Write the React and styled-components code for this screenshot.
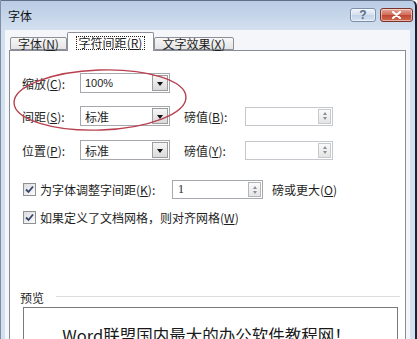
import React from "react";
import styled, { createGlobalStyle } from "styled-components";

const GlobalStyle = createGlobalStyle`
  html, body { margin: 0; padding: 0; }
  body {
    width: 417px;
    height: 339px;
    overflow: hidden;
    font-family: "Noto Sans CJK SC", "Liberation Sans", sans-serif;
    font-size: 12px;
    color: #1e1e1e;
  }
`;

const Window = styled.div`
  position: relative;
  width: 417px;
  height: 339px;
  box-sizing: border-box;
  display: flex;
  flex-direction: column;
  background: linear-gradient(#b9cce4, #d3e0f0 30px, #d3e0f0);
  border-top: 1px solid #5e6f86;
  border-left: 1px solid #7d8ea5;
  border-right: 2px solid #16253a;
  border-top-right-radius: 6px;
  padding: 0 5px 0 4px;
  overflow: hidden;
`;

const TitleBar = styled.div`
  height: 29px;
  flex: none;
  display: flex;
  justify-content: space-between;
  margin-right: -3px;
`;

const Title = styled.div`
  padding: 6px 0 0 3px;
  font-size: 12px;
  color: #111;
`;

const TitleButtons = styled.div`
  display: flex;
  gap: 4px;
  margin-top: 7px;
`;

const CapButton = styled.div`
  height: 14px;
  width: ${(p) => (p.$close ? 33 : 26)}px;
  box-sizing: border-box;
  border-radius: 3px;
  display: flex;
  align-items: center;
  justify-content: center;
  border: 1px solid ${(p) => (p.$close ? "#7a3328" : "#7c8ea8")};
  background: ${(p) =>
    p.$close
      ? "linear-gradient(#e6a99b, #cf6b58 50%, #bd4633 51%, #cf6a4e)"
      : "linear-gradient(#eef3fa, #d4e0ef 50%, #c2d2e7 51%, #d6e3f2)"};
  box-shadow: inset 0 0 0 1px rgba(255, 255, 255, 0.5);
  color: #5a6d88;
  font-family: "Liberation Sans", sans-serif;
  font-size: 12px;
  font-weight: bold;
  line-height: 1;
`;

const Client = styled.div`
  flex: 1;
  display: flex;
  flex-direction: column;
  background: #f4f6f9;
  padding: 2px 4px 0 4px;
  min-height: 0;
`;

const TabStrip = styled.div`
  display: flex;
  align-items: flex-end;
  height: 18px;
  padding-left: 1px;
  flex: none;
`;

const Tab = styled.div`
  position: relative;
  z-index: ${(p) => (p.$active ? 2 : 1)};
  box-sizing: border-box;
  width: ${(p) => p.$w}px;
  height: ${(p) => (p.$active ? 19 : 13)}px;
  margin-bottom: ${(p) => (p.$active ? -1 : 0)}px;
  border: 1px solid #8c9099;
  border-bottom: ${(p) => (p.$active ? "none" : "1px solid #8c9099")};
  border-radius: 2px 2px 0 0;
  background: ${(p) =>
    p.$active ? "#fff" : "linear-gradient(#f7f7f7, #e4e4e4)"};
  display: flex;
  align-items: center;
  justify-content: center;
  padding-top: ${(p) => (p.$active ? 2 : 0)}px;
  font-size: 12px;
  line-height: 12px;
  white-space: nowrap;
`;

const Focus = styled.span`
  border: 1px dotted #222;
  padding: 0 2px;
  line-height: 12px;
`;

const Panel = styled.div`
  position: relative;
  flex: 1;
  background: #fff;
  border: 1px solid #898c94;
  border-bottom: none;
  padding-left: 12px;
  display: flex;
  flex-direction: column;
`;

const Row = styled.div`
  display: flex;
  align-items: center;
  height: 20px;
  margin-top: ${(p) => p.$mt}px;
  flex: none;
`;

const Label = styled.div`
  width: 58px;
  white-space: nowrap;
`;

const Select = styled.div`
  width: 90px;
  height: 20px;
  box-sizing: border-box;
  border: 1px solid #a5a9ae;
  background: #fff;
  display: flex;
  align-items: center;
  padding-left: 4px;
  font-size: 12px;
`;

const SelectValue = styled.div`
  flex: 1;
  font-size: ${(p) => (p.$latin ? 11 : 12)}px;
  font-family: ${(p) =>
    p.$latin ? '"Liberation Sans", sans-serif' : "inherit"};
`;

const DropButton = styled.div`
  width: 16px;
  height: 16px;
  margin-right: 1px;
  box-sizing: border-box;
  border: 1px solid #9c9c9c;
  background: linear-gradient(#f6f6f6, #dadada);
  display: flex;
  align-items: center;
  justify-content: center;

  &::after {
    content: "";
    border-left: 3.5px solid transparent;
    border-right: 3.5px solid transparent;
    border-top: 4px solid #111;
    margin-top: 1px;
  }
`;

const PointLabel = styled.div`
  margin-left: 14px;
  width: 61px;
  white-space: nowrap;
`;

const Spin = styled.div`
  width: ${(p) => p.$w}px;
  height: 19px;
  box-sizing: border-box;
  border: 1px solid ${(p) => (p.$off ? "#c4c7cb" : "#a5a9ae")};
  background: #fff;
  display: flex;
  align-items: center;
  padding-left: 5px;
`;

const SpinValue = styled.div`
  flex: 1;
  font-family: "Liberation Serif", serif;
  font-size: 12px;
`;

const SpinButtons = styled.div`
  width: 13px;
  height: 15px;
  margin-right: 1px;
  box-sizing: border-box;
  border: 1px solid ${(p) => (p.$off ? "#c6c9cd" : "#b2b5b9")};
  background: linear-gradient(#fafafa, #e4e4e4);
  display: flex;
  flex-direction: column;
  align-items: center;
  justify-content: center;
  gap: 2px;
`;

const Arrow = styled.span`
  width: 0;
  height: 0;
  border-left: 2.5px solid transparent;
  border-right: 2.5px solid transparent;
  ${(p) =>
    p.$up
      ? "border-bottom: 3px solid #8a8f96;"
      : "border-top: 3px solid #8a8f96;"}
`;

const CheckRow = styled.div`
  display: flex;
  align-items: center;
  height: 19px;
  margin-top: ${(p) => p.$mt}px;
  padding-left: 1px;
  flex: none;
`;

const Box = styled.div`
  width: 13px;
  height: 13px;
  box-sizing: border-box;
  border: 1px solid #8f9092;
  background: linear-gradient(135deg, #dcdde0, #fbfbfb);
  display: flex;
  align-items: center;
  justify-content: center;
  margin-right: 4px;
`;

const CheckText = styled.div`
  width: ${(p) => (p.$w ? `${p.$w}px` : "auto")};
  white-space: nowrap;
`;

const After = styled.div`
  margin-left: 9px;
  white-space: nowrap;
`;

const PreviewHead = styled.div`
  display: flex;
  align-items: center;
  height: 14px;
  margin: 63px 5px 0 -2px;
  flex: none;
`;

const Rule = styled.div`
  flex: 1;
  margin-left: 12px;
  border-top: 1px solid #dcdcdc;
  border-bottom: 1px solid #fff;
`;

const PreviewBox = styled.div`
  flex: 1;
  margin: 3px 7px 0 1px;
  border: 1px solid #7b7b7b;
  border-bottom: none;
  padding-top: 19px;
  text-align: center;
  font-size: 16.5px;
  line-height: 1;
  color: #1a1a1a;
  white-space: nowrap;
  padding-right: 8px;
`;

const Ring = styled.svg`
  position: absolute;
  left: 0;
  top: 0;
  pointer-events: none;
  overflow: visible;
`;

const Key = ({ k }) => (
  <>
    (<u>{k}</u>)
  </>
);

const Check = () => (
  <Box>
    <svg width="9" height="9" viewBox="0 0 9 9">
      <path d="M1 4.5 L3.5 7 L8 1.5" fill="none" stroke="#34466a" strokeWidth="1.8" />
    </svg>
  </Box>
);

const SpinBox = ({ w, value, off }) => (
  <Spin $w={w} $off={off}>
    <SpinValue>{value}</SpinValue>
    <SpinButtons $off={off}>
      <Arrow $up />
      <Arrow />
    </SpinButtons>
  </Spin>
);

const Combo = ({ value, latin }) => (
  <Select>
    <SelectValue $latin={latin}>{value}</SelectValue>
    <DropButton />
  </Select>
);

export default function App() {
  return (
    <>
      <GlobalStyle />
      <Window>
        <TitleBar>
          <Title>字体</Title>
          <TitleButtons>
            <CapButton>?</CapButton>
            <CapButton $close>
              <svg width="11" height="8" viewBox="0 0 11 8">
                <path d="M2 1 L9 7 M9 1 L2 7" stroke="#fff" strokeWidth="2.2" strokeLinecap="round" />
              </svg>
            </CapButton>
          </TitleButtons>
        </TitleBar>
        <Client>
          <TabStrip>
            <Tab $w={57}>
              字体<Key k="N" />
            </Tab>
            <Tab $w={87} $active>
              <Focus>
                字符间距<Key k="R" />
              </Focus>
            </Tab>
            <Tab $w={80}>
              文字效果<Key k="X" />
            </Tab>
          </TabStrip>
          <Panel>
            <Row $mt={22}>
              <Label>
                缩放<Key k="C" />:
              </Label>
              <Combo value="100%" latin />
            </Row>
            <Row $mt={13}>
              <Label>
                间距<Key k="S" />:
              </Label>
              <Combo value="标准" />
              <PointLabel>
                磅值<Key k="B" />:
              </PointLabel>
              <SpinBox w={88} off />
            </Row>
            <Row $mt={14}>
              <Label>
                位置<Key k="P" />:
              </Label>
              <Combo value="标准" />
              <PointLabel>
                磅值<Key k="Y" />:
              </PointLabel>
              <SpinBox w={88} off />
            </Row>
            <CheckRow $mt={20}>
              <Check />
              <CheckText $w={132}>
                为字体调整字间距<Key k="K" />:
              </CheckText>
              <SpinBox w={91} value="1" />
              <After>
                磅或更大<Key k="O" />
              </After>
            </CheckRow>
            <CheckRow $mt={9}>
              <Check />
              <CheckText>
                如果定义了文档网格，则对齐网格<Key k="W" />
              </CheckText>
            </CheckRow>
            <PreviewHead>
              预览
              <Rule />
            </PreviewHead>
            <PreviewBox>Word联盟国内最大的办公软件教程网！</PreviewBox>
            <Ring width="200" height="100">
              <ellipse
                cx="90"
                cy="49"
                rx="86"
                ry="30"
                fill="none"
                stroke="#b8404f"
                strokeWidth="1.4"
                transform="rotate(-2 90 49)"
              />
            </Ring>
          </Panel>
        </Client>
      </Window>
    </>
  );
}
